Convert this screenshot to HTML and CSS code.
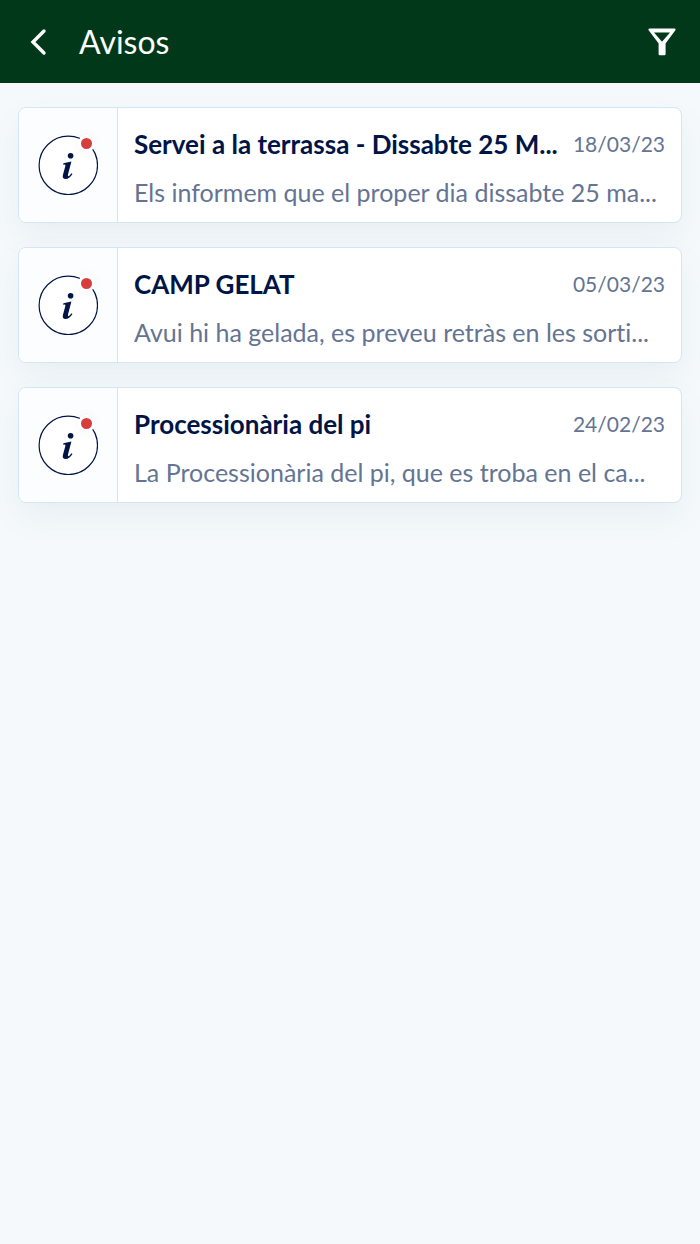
FILE: index.html
```
<!DOCTYPE html>
<html lang="ca">
<head>
<meta charset="utf-8">
<meta name="viewport" content="width=device-width, initial-scale=1">
<title>Avisos</title>
<link rel="stylesheet" href="styles.css">
</head>
<body>
<svg class="sprite" aria-hidden="true">
  <symbol id="info" viewBox="0 0 60 60">
    <circle cx="30.3" cy="30.4" r="29.2" fill="#fff" stroke="#001446" stroke-width="1.2"/>
    <circle cx="32.6" cy="20.8" r="2.8" fill="#001446"/>
    <path d="M25.4 28.2 L33.4 26.4 L30 39.6 Q29.6 41.6 30.6 41.2 Q31.8 40.6 33.4 38.2 L34.5 38.9 Q31.2 44 27.7 44 Q24 44 24.9 40 L27.3 31.2 Q27.8 29.5 26.7 29.5 L25.2 29.7 Z" fill="#001446"/>
  </symbol>
</svg>
<header class="topbar">
  <button class="icon-button" type="button" aria-label="Enrere">
    <svg class="icon-back" viewBox="0 0 18 30"><path d="M15 4 L4 15 L15 26" fill="none" stroke="currentColor" stroke-width="3.4" stroke-linecap="round"/></svg>
  </button>
  <h1 class="title">Avisos</h1>
  <button class="icon-button" type="button" aria-label="Filtra">
    <svg class="icon-filter" viewBox="0 0 28 28"><path d="M1.6 1.6 H26.4 L16.4 15 V26 H11.8 V15 Z" fill="currentColor" stroke="currentColor" stroke-width="2.4" stroke-linejoin="round"/><path class="icon-hole" d="M6 4.4 H22 L14 13.8 Z"/></svg>
  </button>
</header>
<main class="list">
  <article class="card">
    <div class="badge"><div class="mark"><svg class="info"><use href="#info"/></svg><span class="dot"></span></div></div>
    <div class="body">
      <div class="head"><h2 class="subject">Servei a la terrassa - Dissabte 25 M...</h2><time class="date">18/03/23</time></div>
      <p class="preview">Els informem que el proper dia dissabte 25 ma...</p>
    </div>
  </article>
  <article class="card">
    <div class="badge"><div class="mark"><svg class="info"><use href="#info"/></svg><span class="dot"></span></div></div>
    <div class="body">
      <div class="head"><h2 class="subject">CAMP GELAT</h2><time class="date">05/03/23</time></div>
      <p class="preview">Avui hi ha gelada, es preveu retràs en les sorti...</p>
    </div>
  </article>
  <article class="card">
    <div class="badge"><div class="mark"><svg class="info"><use href="#info"/></svg><span class="dot"></span></div></div>
    <div class="body">
      <div class="head"><h2 class="subject">Processionària del pi</h2><time class="date">24/02/23</time></div>
      <p class="preview">La Processionària del pi, que es troba en el ca...</p>
    </div>
  </article>
</main>
</body>
</html>
```
FILE: styles.css
```
* { box-sizing: border-box; }
body {
  margin: 0;
  min-height: 100vh;
  background: #f5f9fc;
  font-family: Lato, sans-serif;
  font-variant-ligatures: none;
}
h1, h2, p { margin: 0; font-weight: 400; }
.sprite { display: none; }
.topbar {
  display: flex;
  align-items: center;
  gap: 17px;
  padding: 18px 14px;
  background: #003819;
  color: #fff;
}
.icon-button {
  display: flex;
  align-items: center;
  justify-content: center;
  width: 48px;
  height: 47px;
  padding: 0;
  border: 0;
  background: none;
  color: inherit;
}
.icon-back { width: 18px; height: 30px; }
.icon-filter { width: 28px; height: 28px; }
.icon-hole { fill: #003819; }
.title { flex: 1; font-size: 32px; line-height: 47px; }
.list {
  display: flex;
  flex-direction: column;
  gap: 24px;
  padding: 24px 18px;
}
.card {
  display: flex;
  border: 1px solid #d3e6f1;
  border-radius: 8px;
  background: #fff;
  box-shadow: 0 14px 32px rgba(70, 120, 130, 0.07);
}
.badge {
  display: flex;
  flex: none;
  align-items: center;
  justify-content: center;
  width: 99px;
  border-right: 1px solid #d3e6f1;
  border-radius: 7px 0 0 7px;
  background: #fcfdff;
}
.mark { position: relative; width: 60px; height: 60px; }
.info { display: block; width: 60px; height: 60px; }
.dot {
  position: absolute;
  top: 0;
  right: 3px;
  width: 17px;
  height: 17px;
  border: 3px solid #fff;
  border-radius: 50%;
  background: #d63e3e;
  box-shadow: 0 0 8px rgba(70, 110, 130, 0.08);
}
.body { flex: 1; min-width: 0; padding: 16px 16px 13px; }
.head { display: flex; align-items: center; gap: 8px; }
.subject {
  flex: 1;
  min-width: 0;
  overflow: hidden;
  white-space: nowrap;
  text-overflow: ellipsis;
  color: #001446;
  font-size: 26px;
  font-weight: 700;
  line-height: 40px;
}
.date { flex: none; color: #647493; font-size: 21px; line-height: 40px; }
.preview {
  overflow: hidden;
  white-space: nowrap;
  text-overflow: ellipsis;
  margin-top: 11px;
  color: #647493;
  font-size: 25px;
  line-height: 34px;
}
```
